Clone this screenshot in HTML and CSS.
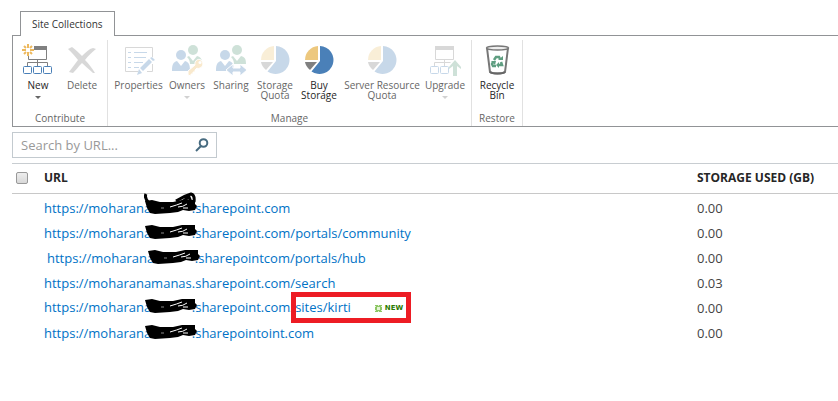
FILE: index.html
```html
<!DOCTYPE html>
<html lang="en">
<head>
<meta charset="UTF-8">
<meta name="viewport" content="width=device-width, initial-scale=1.0">
<title>Site Collections</title>
<link rel="stylesheet" href="styles.css">
</head>
<body>

<!-- shared shapes -->
<svg class="defs" aria-hidden="true">
    <symbol id="pie" viewBox="0 0 32 32">
        <path fill="#4a80b8" d="M17 2a14 14 0 1 1-8.500 25.500L17 17z"/>
        <path fill="#edc87e" d="M15 2v14H2A14 14 0 0 1 15 2z"/>
        <path fill="#808080" d="M2 18h12l-7 8a13 13 0 0 1-5-8z"/>
    </symbol>
    <symbol id="people" viewBox="0 0 32 32">
        <g fill="#5f9e81">
            <circle cx="22" cy="6" r="5"/>
            <path d="M16 13l2-1 4 5 4-5c4 1 5 3 5 8H19c0-3-1-5-3-7z"/>
        </g>
        <g fill="#4a80b8">
            <circle cx="10" cy="11" r="5"/>
            <path d="M1 27c0-6 1-9 5-10l4 5 4-5c4 1 5 4 5 10z"/>
        </g>
    </symbol>
    <symbol id="scribble" viewBox="0 0 53 16">
        <path d="M1 2l7-1 8 2h13l9-2 13 0 0 4 2 2-2 4-6 1-6-1-5 2-8 1-15 1-5-1-3-5z"/>
        <path d="M26 8q7-2 12-4M34 8q5 0 9-3M39 9h5" fill="none" stroke="#fff"/>
        <path d="M17 9h3" stroke="#888"/>
    </symbol>
</svg>

<nav class="tabs">
    <a class="tab" href="#ribbon">Site Collections</a>
</nav>

<div class="ribbon" id="ribbon">
    <section class="group">
        <div class="commands">
            <button class="command" type="button">
                <svg class="icon" viewBox="0 0 32 32">
                    <path fill="#808080" d="M12 2h13v4H12z"/>
                    <path fill="none" stroke="#808080" d="M24.500 6v9.500h-18V12M15.500 15v7M5.500 22v-3.500h20V22"/>
                    <path fill="none" stroke="#edb95e" stroke-width="2" d="M6 0v4M6 8v4M0 6h4M8 6h4M2 2l2 2M8 8l2 2M10 2L8 4M4 8l-2 2"/>
                    <g fill="#fff" stroke="#4a80b8"><rect x="1.500" y="22.500" width="8" height="7" rx="1"/><rect x="11.500" y="22.500" width="8" height="7" rx="1"/><rect x="21.500" y="22.500" width="8" height="7" rx="1"/></g>
                </svg>
                <span>New</span>
                <i class="arrow"></i>
            </button>
            <button class="command" type="button" disabled>
                <svg class="icon" viewBox="0 0 32 32"><path fill="#808080" d="M2 5l4-2c4 3 7 6 10 9 4-4 7-7 11-8l3 1c-4 3-8 7-11 11 4 4 7 8 10 13h-2c-4-4-8-7-11-10-4 4-6 7-9 10l-4-1c3-4 6-8 9-12-3-4-6-7-10-11z"/></svg>
                <span>Delete</span>
            </button>
        </div>
        <h2 class="caption">Contribute</h2>
    </section>

    <section class="group manage">
        <div class="commands">
            <button class="command properties" type="button" disabled>
                <svg class="icon" viewBox="0 0 32 32">
                    <path fill="none" stroke="#808080" d="M15 27.500H2.500v-24h27V13M29.500 20v7.500H24"/>
                    <path stroke="#4a80b8" d="M5 8.500h3M5 13.500h3M5 18.500h3M5 23.500h3"/>
                    <path stroke="#4a80b8" d="M11 8.500h13M11 13.500h12M11 18.500h9M11 23.500h5"/>
                    <path fill="#4a80b8" d="M14 31l2-6 3 4zM17 24l9-9 3 3-9 9zM27 14l2-1 3 3-2 1z"/>
                </svg>
                <span>Properties</span>
            </button>
            <button class="command" type="button" disabled>
                <svg class="icon" viewBox="0 0 32 32">
                    <use href="#people"/>
                    <path fill="#edb95e" stroke="#fff" d="M17 31v-4l7-6c-1-4 3-7 6-5 3 3 2 7-1 8-2 1-3 0-3 0l-2 2v2h-2v2h-2v2z"/>
                    <circle cx="29" cy="18.500" r="1.500" fill="#fff"/>
                </svg>
                <span>Owners</span>
                <i class="arrow"></i>
            </button>
            <button class="command" type="button" disabled>
                <svg class="icon" viewBox="0 0 32 32">
                    <use href="#people"/>
                    <path fill="#4a80b8" stroke="#fff" d="M11 26l7-6v4h7v-4l7 6-7 6v-4h-7v4z"/>
                </svg>
                <span>Sharing</span>
            </button>
            <button class="command" type="button" disabled>
                <svg class="icon"><use href="#pie"/></svg>
                <span>Storage<br>Quota</span>
            </button>
            <button class="command" type="button">
                <svg class="icon"><use href="#pie"/></svg>
                <span>Buy<br>Storage</span>
            </button>
            <button class="command wide" type="button" disabled>
                <svg class="icon"><use href="#pie"/></svg>
                <span>Server Resource<br>Quota</span>
            </button>
            <button class="command" type="button" disabled>
                <svg class="icon" viewBox="0 0 32 32">
                    <path fill="#808080" d="M6 2h19v4H6z"/>
                    <path fill="none" stroke="#808080" d="M6.500 5v10.500h18V5M15.500 15v7M5.500 22v-3.500h16"/>
                    <g fill="none" stroke="#4a80b8"><rect x="1.500" y="22.500" width="8" height="7" rx="1"/><rect x="11.500" y="22.500" width="8" height="7" rx="1"/></g>
                    <path fill="#5f9e81" d="M26 16l6 7v2l-4-3v10h-4V22l-4 3v-2z"/>
                </svg>
                <span>Upgrade</span>
                <i class="arrow"></i>
            </button>
        </div>
        <h2 class="caption">Manage</h2>
    </section>

    <section class="group">
        <div class="commands">
            <button class="command" type="button">
                <svg class="icon" viewBox="0 0 32 32">
                    <path fill="#fff" stroke="#777" stroke-width="2" d="M6 4l3 24c2 2 13 2 15 0l3-24"/>
                    <ellipse cx="16.500" cy="4" rx="11" ry="2" fill="#eee" stroke="#777" stroke-width="1.500"/>
                    <path fill="none" stroke="#666" stroke-width="2" d="M9 28c3 2 12 2 15 0"/>
                    <g fill="none" stroke="#5f9e81" stroke-width="2.500"><path d="M13 16l2-3h3l1 2"/><path d="M20 18l1 3h-4"/><path d="M15 22h-3l-1-2 1-2"/></g>
                    <path fill="#5f9e81" d="M17 16h5v-4zM18 18v6l-3-3zM10 17h5l-1 4z"/>
                </svg>
                <span>Recycle<br>Bin</span>
            </button>
        </div>
        <h2 class="caption">Restore</h2>
    </section>
</div>

<form class="search">
    <input type="text" placeholder="Search by URL..." aria-label="Search by URL">
    <button type="submit" aria-label="Search">
        <svg viewBox="0 0 14 14"><circle cx="8.500" cy="5" r="3.800"/><path d="M6 8l-5 5"/></svg>
    </button>
</form>

<table class="sites">
    <thead>
        <tr>
            <th class="pick"><input type="checkbox" aria-label="Select all"></th>
            <th>URL</th>
            <th class="storage">STORAGE USED (GB)</th>
        </tr>
    </thead>
    <tbody>
        <tr>
            <td></td>
            <td><a href="#">https://moharana<span class="redacted">manas<svg class="mark"><use href="#scribble"/></svg><svg class="loop" viewBox="0 0 53 12"><path d="M5 11Q0 6 2 2M32 9Q40 4 47 2q4 1 3 8M38 10l7-5 2 5"/></svg></span>.sharepoint.com</a></td>
            <td>0.00</td>
        </tr>
        <tr>
            <td></td>
            <td><a href="#">https://moharana<span class="redacted">manas<svg class="mark"><use href="#scribble"/></svg></span>.sharepoint.com/portals/community</a></td>
            <td>0.00</td>
        </tr>
        <tr>
            <td></td>
            <td class="shifted"><a href="#">https://moharana<span class="redacted">manas<svg class="mark"><use href="#scribble"/></svg></span>.sharepointcom/portals/hub</a></td>
            <td>0.00</td>
        </tr>
        <tr>
            <td></td>
            <td><a href="#">https://moharanamanas.sharepoint.com/search</a></td>
            <td>0.03</td>
        </tr>
        <tr>
            <td></td>
            <td><a href="#">https://moharana<span class="redacted">manas<svg class="mark"><use href="#scribble"/></svg></span>.sharepoint.com</a><span class="highlight"><a href="#">/sites/kirti</a><span class="new"><svg viewBox="0 0 7 7"><path fill="#8cc665" d="M0 0h7v7H0z"/><path fill="#e4f5d4" d="M2 2h3v3H2zM0 1h1v1H0zM6 1h1v1H6zM0 5h1v1H0zM6 5h1v1H6zM3 0h1v1H3zM3 6h1v1H3z"/></svg>NEW</span></span></td>
            <td>0.00</td>
        </tr>
        <tr>
            <td></td>
            <td><a href="#">https://moharana<span class="redacted">manas<svg class="mark"><use href="#scribble"/></svg></span>.sharepointoint.com</a></td>
            <td>0.00</td>
        </tr>
    </tbody>
</table>

</body>
</html>
```
FILE: styles.css
```css
body {
    font-family: "Open Sans", "Noto Sans", sans-serif;
    font-size: 13px;
    color: #444;
    background-color: white;
    margin: 0;
    padding: 11px 0 0 12px;
}
button,
input {
    font-family: inherit;
}
.defs {
    display: none;
}

/* Ribbon */
.tabs {
    display: flex;
    padding-left: 8px;
}
.tab {
    position: relative;
    z-index: 1;
    box-sizing: border-box;
    height: 25px;
    margin-bottom: -1px;
    padding: 0 11px;
    border: 1px solid #919396;
    border-bottom: none;
    background-color: white;
    color: #333;
    font-size: 10px;
    line-height: 24px;
    text-decoration: none;
}
.ribbon {
    display: flex;
    box-sizing: border-box;
    height: 92px;
    padding-top: 4px;
    border: 1px solid #919396;
    border-right: none;
}
.group {
    display: flex;
    flex-direction: column;
    justify-content: space-between;
    padding: 0 3px;
    border-right: 1px solid #e1e1e1;
}
.manage {
    padding: 0 4px;
}
.commands {
    display: flex;
}
.command {
    display: flex;
    flex-direction: column;
    align-items: center;
    min-width: 44px;
    padding: 4px 0 0;
    border: none;
    background: none;
    color: #262626;
    font-size: 10px;
    line-height: 10px;
    white-space: nowrap;
}
.command:disabled {
    color: #666;
}
.command:disabled .icon,
.command:disabled .arrow {
    opacity: 0.3;
}
.properties {
    min-width: 53px;
}
.wide {
    min-width: 82px;
}
.icon {
    width: 32px;
    height: 32px;
    margin-bottom: 4px;
}
.arrow {
    margin-top: 6px;
    border: 3px solid transparent;
    border-top-color: #666;
    border-bottom: none;
}
.caption {
    margin: 0;
    color: #666;
    font-size: 10px;
    font-weight: normal;
    line-height: 16px;
    text-align: center;
}

/* Search */
.search {
    display: flex;
    box-sizing: border-box;
    width: 205px;
    height: 26px;
    margin: 5px 0 5px;
    border: 1px solid #c3cacf;
}
.search input {
    flex: 1;
    min-width: 0;
    padding: 0 8px;
    border: none;
    color: #444;
    font-size: 13px;
}
.search input::placeholder {
    color: #999;
}
.search button {
    width: 28px;
    padding: 0;
    border: none;
    background: none;
}
.search svg {
    display: block;
    width: 14px;
    height: 14px;
    margin: 0 auto;
    fill: none;
    stroke: #476b80;
    stroke-width: 2;
}

/* Site list */
.sites {
    width: 100%;
    border-collapse: collapse;
    table-layout: fixed;
    border-top: 1px solid #c8cdd1;
}
.sites th {
    height: 27px;
    padding: 0 0 2px;
    border-bottom: 1px solid #c8c8c8;
    color: #262626;
    font-size: 12px;
    text-align: left;
}
.sites td {
    height: 25px;
    padding: 0;
    line-height: 20px;
    white-space: nowrap;
}
.sites tbody::before {
    content: "";
    display: block;
    height: 1px;
}
.sites .pick {
    width: 32px;
}
.pick input {
    appearance: none;
    display: block;
    width: 12px;
    height: 12px;
    margin: 0 0 0 4px;
    border: 1px solid #999;
    border-radius: 2px;
    background: linear-gradient(#eee, #d8d8d8);
}
.sites .storage {
    width: 141px;
}
.sites a {
    color: #0072c6;
    text-decoration: none;
}
.sites .shifted {
    padding-left: 3px;
}
.redacted {
    position: relative;
    color: transparent;
}
.mark {
    position: absolute;
    top: 0;
    left: -7px;
    width: 53px;
    height: 16px;
    fill: black;
}
.loop {
    position: absolute;
    top: -7px;
    left: -7px;
    width: 53px;
    height: 12px;
    fill: none;
    stroke: black;
    stroke-width: 3;
}
.highlight {
    position: relative;
}
.highlight::after {
    content: "";
    position: absolute;
    inset: -6px -8px -7px 1px;
    border: 5px solid #ed1c24;
}
.new {
    margin-left: 24px;
    color: #2a7a00;
    font-family: "DejaVu Sans", sans-serif;
    font-size: 7px;
    font-weight: bold;
    vertical-align: middle;
}
.new svg {
    width: 7px;
    height: 7px;
    margin-right: 3px;
    vertical-align: middle;
}
```
